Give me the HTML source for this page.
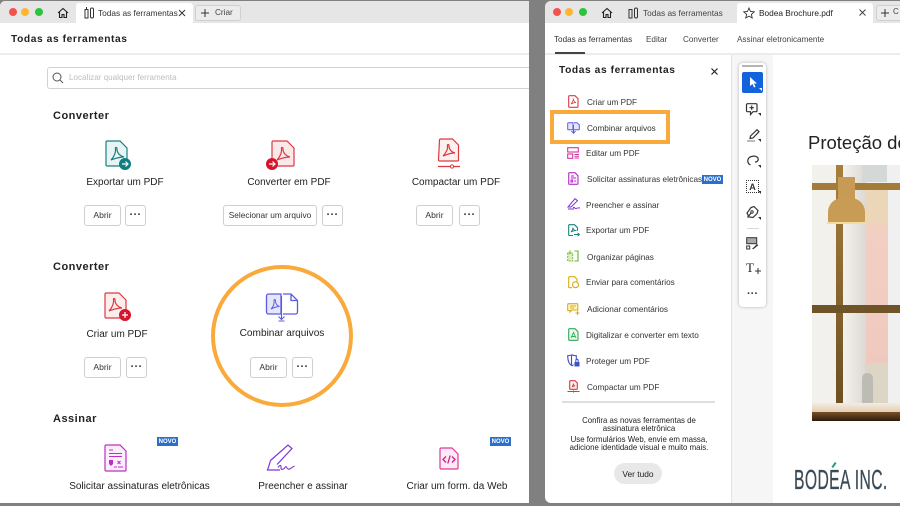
<!DOCTYPE html>
<html><head><meta charset="utf-8"><style>
html,body{margin:0;padding:0}
body{width:900px;height:506px;overflow:hidden;background:#808080;position:relative;font-family:"Liberation Sans",sans-serif;color:#2c2c2c}
div,span,svg{position:absolute;box-sizing:border-box}
.t{white-space:nowrap;line-height:12px}
.c{text-align:center;width:200px;font-size:10px;color:#222}
.h{font-weight:700;font-size:11px;color:#222;letter-spacing:.5px}
.b{border:1.3px solid #cfcfcf;border-radius:3px;background:#fff;height:21px;font-size:8.6px;text-align:center;line-height:19px;color:#333}
.m{border:1.3px solid #cfcfcf;border-radius:3px;background:#fff;height:21px;width:21px;font-size:11px;font-weight:700;text-align:center;line-height:19px;color:#333;letter-spacing:.3px}
.s{font-size:8.2px;color:#333;left:587px}
.n{background:#2a6fc9;color:#fff;font-size:6px;font-weight:700;text-align:center;width:21px;height:9px;line-height:10px}
.d{border-radius:50%;width:8px;height:8px;top:8px}
svg{overflow:visible;fill:none}
</style></head><body>
<!-- left window -->
<div style="left:0;top:1px;width:529px;height:502px;background:#fff;border-radius:5px 0 0 0;overflow:hidden"></div>
<div style="left:0;top:1px;width:529px;height:22px;background:#e6e6e6;border-radius:5px 0 0 0"></div>
<div style="left:76px;top:3px;width:117px;height:20px;background:#fff;border-radius:3px 3px 0 0"></div>
<div class="d" style="left:9px;background:#f4524f"></div><div class="d" style="left:21px;background:#fdb62f"></div><div class="d" style="left:35px;background:#2cc340"></div>
<svg style="left:57px;top:7px" width="12" height="12" viewBox="0 0 12 12"><path d="M1 6L6 1.5 11 6M2.5 5v5.5H5V7.5h2v3h2.500V5" stroke="#222" stroke-width="1.1"/></svg>
<svg style="left:84px;top:7px" width="11" height="12" viewBox="0 0 11 12"><rect x="1" y="2.5" width="3" height="8.500" stroke="#333"/><rect x="6.500" y="1" width="3" height="10" rx="1.400" stroke="#333"/><path d="M2.500 0v2" stroke="#333"/></svg>
<div class="t" style="left:98px;top:7px;font-size:8.300px;color:#333">Todas as ferramentas</div>
<svg style="left:178px;top:9px" width="8" height="8"><path d="M1 1l6 6M7 1L1 7" stroke="#333"/></svg>
<div style="left:195px;top:5px;width:46px;height:16px;border:1px solid #d0d0d0;border-radius:3px;background:#ececec"></div>
<svg style="left:201px;top:9px" width="8" height="8"><path d="M4 0v8M0 4h8" stroke="#333"/></svg>
<div class="t" style="left:215px;top:7px;font-size:8.200px;color:#444">Criar</div>
<div class="t h" style="left:11px;top:34px;font-size:10.200px;letter-spacing:.6px">Todas as ferramentas</div>
<div style="left:0;top:53px;width:529px;height:2px;background:#ececec"></div>
<div style="left:47px;top:67px;width:482px;height:22px;border:1.300px solid #d2d2d2;border-right:0;border-radius:3px 0 0 3px"></div>
<svg style="left:52px;top:72px" width="12" height="12"><circle cx="5" cy="5" r="4" stroke="#555"/><path d="M8 8l3 3" stroke="#555"/></svg>
<div class="t" style="left:69px;top:71.500px;font-size:8.100px;color:#bdbdbd">Localizar qualquer ferramenta</div>

<div class="t h" style="left:53px;top:109.500px">Converter</div>
<div class="t h" style="left:53px;top:260.500px">Converter</div>
<div class="t h" style="left:53px;top:412.500px">Assinar</div>

<!-- Export -->
<svg style="left:105px;top:140px" width="27" height="31" viewBox="0 0 27 31"><path d="M1 2a1 1 0 0 1 1-1h13l7 7v17a1 1 0 0 1-1 1H2a1 1 0 0 1-1-1z" fill="#e8f3f3" stroke="#17817f" stroke-width="1.200"/><path d="M6 20c3-3 5-8 4.500-11-.5-2 1.500-2 1.500 0 0 4 3 7 7 8M6 20c3-1 7-3 13-3" stroke="#17817f" stroke-width="1.200"/><circle cx="20" cy="24" r="6" fill="#0f7c80"/><path d="M17 24h6M20.500 21.500l2.500 2.500-2.500 2.500" stroke="#fff" stroke-width="1.200"/></svg>
<div class="t c" style="left:25px;top:177px">Exportar um PDF</div>
<div class="b" style="left:84px;top:205px;width:37px">Abrir</div>
<div class="m" style="left:125px;top:205px">···</div>

<!-- Convert in -->
<svg style="left:266px;top:140px" width="29" height="31" viewBox="0 0 29 31"><path d="M6 2a1 1 0 0 1 1-1h14l7 7v17a1 1 0 0 1-1 1H7a1 1 0 0 1-1-1z" fill="#fbe9e9" stroke="#d93a42" stroke-width="1.200"/><path d="M11 20c3-3 5-8 4.500-11-.5-2 1.500-2 1.500 0 0 4 3 7 7 8M11 20c3-1 7-3 13-3" stroke="#d93a42" stroke-width="1.200"/><circle cx="6" cy="24" r="6" fill="#d5152c"/><path d="M3 24h6M6.500 21.500l2.500 2.500-2.500 2.500" stroke="#fff" stroke-width="1.200"/></svg>
<div class="t c" style="left:189px;top:177px">Converter em PDF</div>
<div class="b" style="left:223px;top:205px;width:94px;font-size:8.300px">Selecionar um arquivo</div>
<div class="m" style="left:322px;top:205px">···</div>

<!-- Compact -->
<svg style="left:438px;top:138px" width="22" height="30" viewBox="0 0 22 30"><path d="M1.500 2a1 1 0 0 1 1-1h12l6 6v15a1 1 0 0 1-1 1h-18a1 1 0 0 1-1-1z" fill="#fdf0f0" stroke="#d93a42" stroke-width="1.200"/><path d="M5 18c3-3 5-7 4.500-10-.5-2 1.500-2 1.500 0 0 3 2 6 6 7M5 18c3-1 6-3 12-3" stroke="#d93a42" stroke-width="1.200"/><path d="M0 28.500h22" stroke="#d93a42" stroke-width="1.200"/><circle cx="14" cy="28.500" r="1.600" fill="#fff" stroke="#d93a42"/></svg>
<div class="t c" style="left:356px;top:177px">Compactar um PDF</div>
<div class="b" style="left:416px;top:205px;width:37px">Abrir</div>
<div class="m" style="left:459px;top:205px">···</div>

<!-- Criar -->
<svg style="left:104px;top:292px" width="29" height="30" viewBox="0 0 29 30"><path d="M1 2a1 1 0 0 1 1-1h13l7 7v17a1 1 0 0 1-1 1H2a1 1 0 0 1-1-1z" fill="#fdeeee" stroke="#d93a42" stroke-width="1.200"/><path d="M5 19c3-3 5-8 4.500-11-.5-2 1.500-2 1.500 0 0 4 3 7 7 8M5 19c3-1 7-3 13-3" stroke="#d93a42" stroke-width="1.200"/><circle cx="21" cy="23" r="6" fill="#d5152c"/><path d="M18 23h6M21 20v6" stroke="#fff" stroke-width="1.200"/></svg>
<div class="t c" style="left:17px;top:329px">Criar um PDF</div>
<div class="b" style="left:84px;top:357px;width:37px">Abrir</div>
<div class="m" style="left:126px;top:357px">···</div>

<!-- Combinar -->
<div style="left:211px;top:265px;width:142px;height:142px;border:4px solid #f9aa3a;border-radius:50%"></div>
<svg style="left:265px;top:293px" width="34" height="30" viewBox="0 0 34 30"><path d="M16 1H3.500A2 2 0 0 0 1.500 3v16a2 2 0 0 0 2 2H16z" fill="#e6e6fb" stroke="#5a5be0" stroke-width="1.300"/><path d="M18 1h8l6.500 6.500V19a2 2 0 0 1-2 2H18M26 1v6.500h6.500" stroke="#5a5be0" stroke-width="1.300"/><path d="M6 16c2-2 3.500-5 3-8 0-2 1.500-2 1.500 0 0 3 2 5 4 5.500M6 16c2-1 5-2.500 8.500-2.500" stroke="#5a5be0"/><path d="M16.500 3v23M13.500 23.500l3 3 3-3M13.500 28h6" stroke="#5a5be0" stroke-width="1.100"/></svg>
<div class="t c" style="left:182px;top:328px;font-size:10.100px">Combinar arquivos</div>
<div class="b" style="left:250px;top:357px;width:37px">Abrir</div>
<div class="m" style="left:292px;top:357px">···</div>

<!-- Assinar row -->
<svg style="left:104px;top:444px" width="24" height="29" viewBox="0 0 24 29"><path d="M1 2a1 1 0 0 1 1-1h14l6 6v19a1 1 0 0 1-1 1H2a1 1 0 0 1-1-1z" fill="#fbeefb" stroke="#bd2ec4" stroke-width="1.200"/><path d="M5 6h4M5 9.500h13M5 12.500h13" stroke="#bd2ec4"/><path d="M5 16h4v4l-2 2-2-2z" fill="#bd2ec4"/><path d="M13.500 17l3 3M16.500 17l-3 3M10 23h3M14 23h5" stroke="#bd2ec4"/></svg>
<div class="n" style="left:157px;top:437px">NOVO</div>
<div class="t c" style="left:39.500px;top:481px">Solicitar assinaturas eletrônicas</div>
<svg style="left:266px;top:443px" width="30" height="29" viewBox="0 0 30 29"><path d="M4.500 17.500L22 2l4 3.500L11 21.500M4.500 17.500C3.500 21 2.500 24.500 1.500 27H14" stroke="#7d33d6" stroke-width="1.200"/><path d="M12 24.500c2-3 3.500-2.500 3 0s2 2.500 3.500.5 2-1.500 2.500 0 2 1.500 3.500.5 2-1.500 4-2.500" stroke="#7d33d6" stroke-width="1.100"/></svg>
<div class="t c" style="left:203px;top:481px">Preencher e assinar</div>
<svg style="left:439px;top:447px" width="20" height="23" viewBox="0 0 20 23"><path d="M1 2a1 1 0 0 1 1-1h11l6 6v14a1 1 0 0 1-1 1H2a1 1 0 0 1-1-1z" fill="#fdeaf5" stroke="#e0389a" stroke-width="1.200"/><path d="M7 9.500l-3 3 3 3M13 9.500l3 3-3 3M11.200 8.500l-2.400 8" stroke="#cf1f8a" stroke-width="1.300"/></svg>
<div class="n" style="left:490px;top:437px">NOVO</div>
<div class="t c" style="left:357px;top:481px">Criar um form. da Web</div>

<!-- right window -->
<div style="left:545px;top:1px;width:355px;height:502px;background:#fff;border-radius:6px 0 0 6px"></div>
<div style="left:545px;top:1px;width:355px;height:22px;background:#e6e6e6;border-radius:6px 0 0 0"></div>
<div style="left:737px;top:3px;width:136px;height:20px;background:#fff;border-radius:3px 3px 0 0"></div>
<div class="d" style="left:553px;background:#f4524f"></div><div class="d" style="left:565px;background:#fdb62f"></div><div class="d" style="left:579px;background:#2cc340"></div>
<svg style="left:601px;top:7px" width="12" height="12" viewBox="0 0 12 12"><path d="M1 6L6 1.500 11 6M2.500 5v5.500H5V7.500h2v3h2.500V5" stroke="#222" stroke-width="1.100"/></svg>
<svg style="left:628px;top:7px" width="11" height="12" viewBox="0 0 11 12"><rect x="1" y="2.500" width="3" height="8.500" stroke="#333"/><rect x="6.500" y="1" width="3" height="10" rx="1.400" stroke="#333"/></svg>
<div class="t" style="left:643px;top:7px;font-size:8.300px;color:#444">Todas as ferramentas</div>
<svg style="left:743px;top:7px" width="12" height="12" viewBox="0 0 12 12"><path d="M6 1l1.500 3.500 3.700.4-2.800 2.500.8 3.600L6 9.100 2.800 11l.8-3.600L.8 4.900l3.700-.4z" stroke="#333" stroke-width=".9"/></svg>
<div class="t" style="left:759px;top:7px;font-size:8.300px;color:#222">Bodea Brochure.pdf</div>
<svg style="left:859px;top:9px" width="7" height="7"><path d="M.5.500l6 6M6.500.500l-6 6" stroke="#444"/></svg>
<div style="left:876px;top:5px;width:30px;height:16px;border:1px solid #d0d0d0;border-radius:3px;background:#ececec"></div>
<svg style="left:881px;top:9px" width="8" height="8"><path d="M4 0v8M0 4h8" stroke="#333"/></svg>
<div class="t" style="left:893px;top:6px;font-size:8px;color:#444">C</div>

<div class="t" style="left:554px;top:33.500px;font-size:8.150px;color:#333">Todas as ferramentas</div>
<div class="t" style="left:646px;top:33.500px;font-size:8.150px;color:#444">Editar</div>
<div class="t" style="left:683px;top:33.500px;font-size:8.150px;color:#444">Converter</div>
<div class="t" style="left:737px;top:33.500px;font-size:8.150px;color:#444">Assinar eletronicamente</div>
<div style="left:545px;top:53px;width:355px;height:2px;background:#ececec"></div>
<div style="left:555px;top:52px;width:30px;height:2px;background:#444"></div>
<div style="left:731px;top:55px;width:1px;height:448px;background:#e2e2e2"></div>
<div style="left:732px;top:55px;width:41px;height:448px;background:#f6f6f6"></div>

<div class="t h" style="left:559px;top:65px;font-size:10.200px;letter-spacing:.6px">Todas as ferramentas</div>
<svg style="left:711px;top:68px" width="7" height="7"><path d="M.5.500l6 6M6.500.500l-6 6" stroke="#222" stroke-width="1.200"/></svg>

<div style="left:550px;top:110px;width:120px;height:34px;border:4px solid #f9aa3a"></div>
<!-- list icons -->
<svg style="left:568px;top:95px" width="11" height="13" viewBox="0 0 11 13"><path d="M.7 1.500a.8.8 0 0 1 .8-.8H7l3 3v7.800a.8.8 0 0 1-.8.8H1.500a.8.8 0 0 1-.8-.8z" stroke="#d93a42" stroke-width="1.100"/><path d="M3 9c1.500-1.500 2.500-4 2.200-5.500C5.500 5.500 6.500 7 8 7.500 6 7.700 4.500 8 3 9z" stroke="#d93a42" stroke-width=".8"/></svg>
<div class="t s" style="top:96.500px">Criar um PDF</div>
<svg style="left:567px;top:122px" width="13" height="12" viewBox="0 0 13 12"><path d="M6 .7H1.500a.8.8 0 0 0-.8.8v5.500a.8.8 0 0 0 .8.8H6zM7 .7h3l2.300 2.300v4a.8.8 0 0 1-.8.8H7" fill="#e6e6fb" stroke="#5a5be0"/><path d="M6.500 3v8M4.500 9l2 2.200 2-2.200" stroke="#5a5be0"/></svg>
<div class="t s" style="top:123px">Combinar arquivos</div>
<svg style="left:567px;top:147px" width="12" height="12" viewBox="0 0 12 12"><rect x=".7" y=".7" width="10.600" height="4.300" stroke="#d6359b" stroke-width="1.100"/><rect x=".7" y="7" width="5" height="4.300" stroke="#d6359b" stroke-width="1.100"/><path d="M7.500 7.500H12M7.500 9.300H12M7.500 11H12" stroke="#d6359b"/></svg>
<div class="t s" style="top:148px;left:586px">Editar um PDF</div>
<svg style="left:568px;top:172px" width="11" height="13" viewBox="0 0 11 13"><path d="M.7 1.500a.8.8 0 0 1 .8-.8H7l3 3v7.800a.8.8 0 0 1-.8.8H1.500a.8.8 0 0 1-.8-.8z" fill="#fbeefb" stroke="#b531c4" stroke-width="1.100"/><path d="M3 4h3M3 6h5M3 8h1.500v2H3zM6 9h2" stroke="#b531c4"/></svg>
<div class="t s" style="top:173.500px">Solicitar assinaturas eletrônicas</div>
<div class="n" style="left:702px;top:175px">NOVO</div>
<svg style="left:567px;top:198px" width="13" height="12" viewBox="0 0 13 12"><path d="M8 .7l2.500 2L4 9H1z" stroke="#7d33d6"/><path d="M1 11h6M6 10c2-2 1 1 3 .5s2-1 4-.5" stroke="#7d33d6"/></svg>
<div class="t s" style="top:199.500px;left:586px">Preencher e assinar</div>
<svg style="left:568px;top:224px" width="12" height="13" viewBox="0 0 12 13"><path d="M.7 1.500a.8.8 0 0 1 .8-.8H6.500l3 3v3M5 11.500H1.500a.8.8 0 0 1-.8-.8V1.500" stroke="#17817f" stroke-width="1.100"/><path d="M3 8c1.500-1.500 2-3 1.800-4.500C5 5 6 6 7.500 6.500 6 6.800 4.500 7 3 8zM6 10.500h5.500M9.500 8.800l2 1.700-2 1.700" stroke="#17817f" stroke-width=".9"/></svg>
<div class="t s" style="top:225px;left:586px">Exportar um PDF</div>
<svg style="left:567px;top:250px" width="12" height="12" viewBox="0 0 12 12"><path d="M7.500 1H11v10H7.500" stroke="#6ab42d" stroke-width="1.100"/><rect x=".7" y="3" width="5" height="8" fill="#d9efc2" stroke="#7cc03c" stroke-dasharray="2 1"/><path d="M3 .5v3.500" stroke="#6ab42d"/></svg>
<div class="t s" style="top:251.500px">Organizar páginas</div>
<svg style="left:568px;top:276px" width="12" height="13" viewBox="0 0 12 13"><path d="M4 11.700H1.500a.8.8 0 0 1-.8-.8V1.500a.8.8 0 0 1 .8-.8H6.500L9 3.200v2.500" stroke="#d9ab10" stroke-width="1.100"/><circle cx="7.500" cy="8.700" r="3" stroke="#d9ab10" stroke-width="1.100"/></svg>
<div class="t s" style="top:277px;left:586px">Enviar para comentários</div>
<svg style="left:567px;top:303px" width="13" height="12" viewBox="0 0 13 12"><path d="M1.500.7h8.500a.8.8 0 0 1 .8.800v5.500H5l-2 2V7.500H1.500a.8.8 0 0 1-.8-.8V1.500a.8.800 0 0 1 .8-.8z" fill="#fdf6d4" stroke="#d9ab10" stroke-width="1.100"/><path d="M3 3h6M3 5h4M10.500 8v4M8.500 10h4" stroke="#d9ab10"/></svg>
<div class="t s" style="top:303.500px">Adicionar comentários</div>
<svg style="left:568px;top:328px" width="11" height="13" viewBox="0 0 11 13"><path d="M.7 1.500a.8.8 0 0 1 .8-.8H7l3 3v7.800a.8.8 0 0 1-.8.8H1.500a.8.8 0 0 1-.8-.8z" fill="#e9f7ec" stroke="#2eab55" stroke-width="1.100"/><path d="M3 10l2.500-5.500L8 10M3.800 8.500h3.400" stroke="#2eab55" stroke-width=".9"/></svg>
<div class="t s" style="top:329.500px;left:586px">Digitalizar e converter em texto</div>
<svg style="left:567px;top:354px" width="13" height="13" viewBox="0 0 13 13"><path d="M5 .7C3.500 1.500 1.500 1.700.7 1.700c0 4 .5 8 4.300 10 .5-.2 1-.5 1.500-1M5 .7c1 .8 3 1 4.300 1V6M4.500 1v10.500" stroke="#3f51c9" stroke-width="1.100"/><rect x="7.500" y="8" width="5" height="4.500" fill="#3f51c9"/><path d="M8.800 8V6.500a1.200 1.200 0 0 1 2.400 0V8" stroke="#3f51c9"/></svg>
<div class="t s" style="top:355.500px;left:586px">Proteger um PDF</div>
<svg style="left:567px;top:380px" width="13" height="13" viewBox="0 0 13 13"><path d="M2.700 1.500a.8.8 0 0 1 .8-.8h4.500l2.300 2.300v5.500a.8.8 0 0 1-.8.8H3.500a.8.8 0 0 1-.8-.8z" fill="#fdeeee" stroke="#d93a42" stroke-width="1.100"/><path d="M5 7c1-1 1.500-2 1.300-3.500C6.500 5 7 5.500 8 6 6.800 6 6 6.300 5 7z" stroke="#d93a42" stroke-width=".8"/><path d="M.5 11.500h12M6.500 10.500l0 2" stroke="#d93a42"/></svg>
<div class="t s" style="top:381.500px">Compactar um PDF</div>

<div style="left:562px;top:401px;width:153px;height:1.500px;background:#dedede"></div>
<div class="t" style="left:544px;width:190px;top:416.500px;font-size:7.850px;line-height:8.500px;text-align:center;color:#222;white-space:normal">Confira as novas ferramentas de<br>assinatura eletrônica</div>
<div class="t" style="left:544px;width:190px;top:435.500px;font-size:7.850px;line-height:8.500px;text-align:center;color:#222;white-space:normal">Use formulários Web, envie em massa,<br>adicione identidade visual e muito mais.</div>
<div style="left:614px;top:463px;width:48px;height:21px;border-radius:11px;background:#e8e8e8"></div>
<div class="t" style="left:614px;width:48px;top:468px;font-size:8.400px;text-align:center;color:#222">Ver tudo</div>

<!-- toolbar -->
<div style="left:739px;top:63px;width:27px;height:244px;background:#fff;border-radius:4px;box-shadow:0 0 3px rgba(0,0,0,.28)"></div>
<div style="left:742px;top:65px;width:21px;height:2px;background:#b5b5b5"></div>
<div style="left:742px;top:72px;width:21px;height:21px;background:#1263dc;border-radius:2px"></div>
<svg style="left:749px;top:77px" width="9" height="12"><path d="M1 0v9l2.500-2 1.500 3.500 1.500-.6L5 6.500h3z" fill="#fff"/></svg>
<svg style="left:746px;top:103px" width="13" height="13" viewBox="0 0 13 13"><path d="M1.500.7h8.500a1 1 0 0 1 1 1v6a1 1 0 0 1-1 1H7L4.500 11.500V8.700H1.500a1 1 0 0 1-1-1v-6a1 1 0 0 1 1-1zM5.700 2.500v4.400M3.500 4.700h4.400" stroke="#333" stroke-width="1.200"/></svg>
<svg style="left:747px;top:129px" width="14" height="13" viewBox="0 0 14 13"><path d="M10 .7l2 2L6 9 3 9.500 3.500 7z" stroke="#333" stroke-width="1.200"/><path d="M0 12h8" stroke="#777"/></svg>
<svg style="left:747px;top:155px" width="13" height="12" viewBox="0 0 13 12"><path d="M3.500 10C1 9 0 6 1.500 3.500S8 .5 10 2s1.500 5-2 5" stroke="#333" stroke-width="1.200"/></svg>
<div style="left:746px;top:180px;width:13px;height:13px;border:1px dotted #333"></div>
<div class="t" style="left:746px;width:13px;top:180.500px;text-align:center;font-size:9px;font-weight:700;color:#333">A</div>
<svg style="left:746px;top:206px" width="14" height="13" viewBox="0 0 14 13"><path d="M3 11L1 7l4-5.500 3-1 4 4-1 3-4 4zM1.500 11.500L5 7" stroke="#333" stroke-width="1.200"/><circle cx="6" cy="6" r="1.200" stroke="#333"/></svg>
<div style="left:747px;top:228px;width:12px;height:1px;background:#d8d8d8"></div>
<svg style="left:746px;top:237px" width="13" height="13" viewBox="0 0 13 13"><rect x=".7" y=".7" width="10" height="6" fill="#aaa" stroke="#333"/><rect x=".7" y="9" width="3" height="3" stroke="#333"/><path d="M6 12l5-5 1.300 1.300-5 4z" fill="#333"/></svg>
<div class="t" style="left:746px;top:262px;font-size:13px;color:#222;font-family:'Liberation Serif',serif">T</div>
<svg style="left:755px;top:268px" width="6" height="6"><path d="M3 0v6M0 3h6" stroke="#333"/></svg>
<div class="t" style="left:739px;width:27px;top:287.500px;text-align:center;font-size:11px;font-weight:700;color:#333">···</div>
<svg style="left:739px;top:63px" width="27" height="180" viewBox="0 0 27 180"><path d="M23 28v-3h-3z" fill="#fff"/><path d="M22 53v-3h-3zM22 79v-3h-3zM22 105v-3h-3zM22 131v-3h-3zM22 157v-3h-3z" fill="#333"/></svg>

<!-- doc -->
<div class="t" style="left:808px;top:133px;font-size:18.500px;line-height:20px;color:#222;width:92px;overflow:hidden">Proteção de</div>
<div style="left:812px;top:165px;width:88px;height:256px;overflow:hidden;background:#f3f1ec">
<div style="left:54px;top:25px;width:22px;height:198px;background:linear-gradient(#ecd6b8 0,#ecd6b8 30px,#f2cfc3 40px,#f0c8bd)"></div>
<div style="left:31px;top:0;width:23px;height:238px;background:linear-gradient(90deg,#f5f2ee,#dcd9d4)"></div>
<div style="left:0;top:150px;width:24px;height:90px;background:#f2f1ed"></div>
<div style="left:76px;top:0;width:12px;height:238px;background:#eff0ef"></div>
<div style="left:50px;top:0;width:25px;height:17px;background:#d4d8d6"></div>
<div style="left:53px;top:198px;width:23px;height:40px;background:#ddd6c6"></div>
<div style="left:50px;top:208px;width:11px;height:30px;background:#bdbcb4;border-radius:5px 5px 0 0"></div>
<div style="left:24px;top:0;width:7px;height:238px;background:linear-gradient(#a77f3d,#6d4f22)"></div>
<div style="left:0;top:18px;width:88px;height:7px;background:#a37c3a"></div>
<div style="left:0;top:140px;width:88px;height:8px;background:#6f5329"></div>
<div style="left:26px;top:12px;width:17px;height:22px;background:#c79a55"></div>
<div style="left:16px;top:33px;width:37px;height:24px;background:#c99c56;border-radius:14px 14px 1px 1px"></div>
<div style="left:15px;top:57px;width:39px;height:2px;background:#f4dc9d"></div>
<div style="left:0;top:238px;width:88px;height:9px;background:linear-gradient(#f4ecdf,#e4cdb4)"></div>
<div style="left:0;top:247px;width:88px;height:9px;background:linear-gradient(#7b5026,#2c1c0d)"></div>
</div>
<div class="t" style="left:794px;top:466px;font-size:28px;line-height:28px;color:#3b4a58;transform:scaleX(.56);transform-origin:0 0;-webkit-text-stroke:.3px #3b4a58;letter-spacing:.7px">BODEA INC.</div>
<div style="left:833px;top:462px;width:2px;height:6px;background:#15a07a;transform:rotate(35deg)"></div>
</body></html>
